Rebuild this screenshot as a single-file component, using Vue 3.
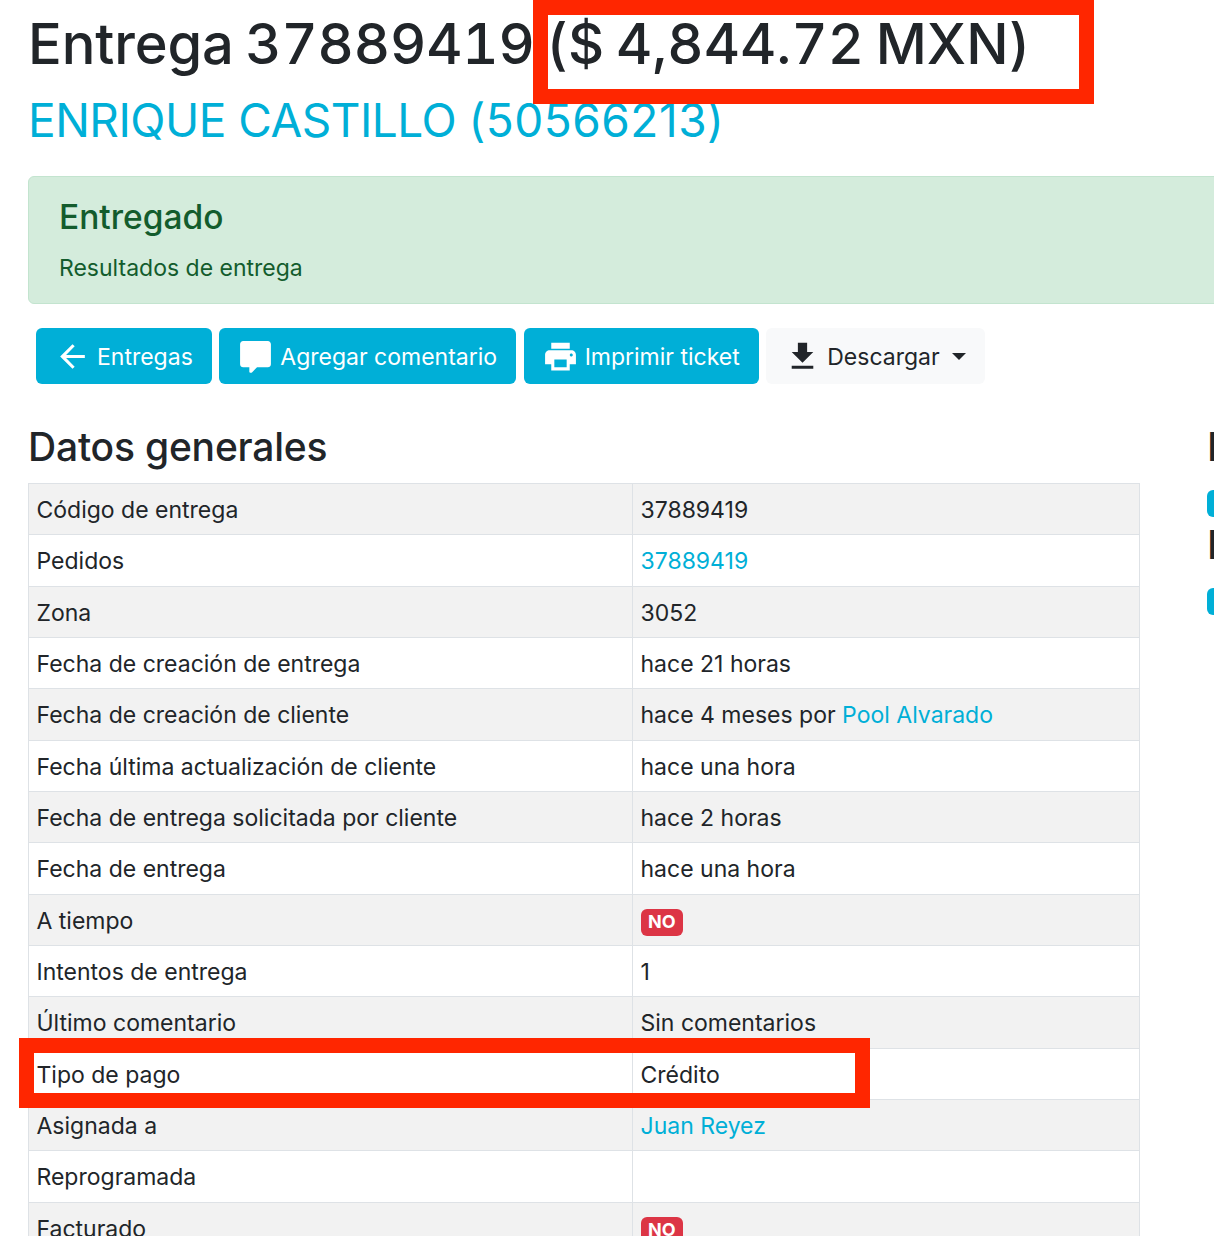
<script setup>
const rows = [
  { label: 'Código de entrega', value: '37889419' },
  { label: 'Pedidos', link: '37889419' },
  { label: 'Zona', value: '3052' },
  { label: 'Fecha de creación de entrega', value: 'hace 21 horas' },
  { label: 'Fecha de creación de cliente', value: 'hace 4 meses por ', link: 'Pool Alvarado' },
  { label: 'Fecha última actualización de cliente', value: 'hace una hora' },
  { label: 'Fecha de entrega solicitada por cliente', value: 'hace 2 horas' },
  { label: 'Fecha de entrega', value: 'hace una hora' },
  { label: 'A tiempo', badge: 'NO' },
  { label: 'Intentos de entrega', value: '1' },
  { label: 'Último comentario', value: 'Sin comentarios' },
  { label: 'Tipo de pago', value: 'Crédito' },
  { label: 'Asignada a', link: 'Juan Reyez' },
  { label: 'Reprogramada', value: '' },
  { label: 'Facturado', badge: 'NO' }
]
</script>

<template>
  <div class="page">
    <div class="wrap">
      <h1 class="title">Entrega 37889419 <span class="total">($ 4,844.72 MXN)</span></h1>
      <h2 class="client"><a>ENRIQUE CASTILLO <span class="client-code">(50566213)</span></a></h2>

      <div class="alert">
        <h4>Entregado</h4>
        <p>Resultados de entrega</p>
      </div>

      <div class="actions">
        <button class="btn info" type="button">
          <svg class="icon" viewBox="0 0 24 24"><path d="M20 11H7.83l5.59-5.59L12 4l-8 8 8 8 1.41-1.41L7.83 13H20v-2z"/></svg>
          Entregas
        </button>
        <button class="btn info" type="button">
          <svg class="icon" viewBox="0 0 24 24"><path d="M4 2h16c1.1 0 2 .9 2 2v13c0 1.1-.9 2-2 2h-7l-3.3 3.3c-.4.4-1.7.3-1.7-.3v-3H4c-1.1 0-2-.9-2-2V4c0-1.1.9-2 2-2z"/></svg>
          Agregar comentario
        </button>
        <button class="btn info" type="button">
          <svg class="icon" viewBox="0 0 24 24"><path d="M19 8H5c-1.66 0-3 1.34-3 3v6h4v4h12v-4h4v-6c0-1.66-1.34-3-3-3zm-3 11H8v-5h8v5zm3-7c-.55 0-1-.45-1-1s.45-1 1-1 1 .45 1 1-.45 1-1 1zm-1-9H6v4h12V3z"/></svg>
          Imprimir ticket
        </button>
        <button class="btn light" type="button">
          <svg class="icon" viewBox="0 0 24 24"><path d="M19 9h-4V3H9v6H5l7 7 7-7zM5 18v2h14v-2H5z"/></svg>
          Descargar
          <span class="caret"></span>
        </button>
      </div>

      <div class="columns">
        <section class="left">
          <h3 class="section-title">Datos generales</h3>
          <table class="data">
            <tbody>
              <tr v-for="row in rows" :key="row.label">
                <td class="c1">{{ row.label }}</td>
                <td>
                  {{ row.value }}<a v-if="row.link">{{ row.link }}</a>
                  <span v-if="row.badge" class="badge">{{ row.badge }}</span>
                </td>
              </tr>
            </tbody>
          </table>
        </section>
        <section class="right">
          <h3 class="section-title">Productos</h3>
          <div class="mini-btn"></div>
          <h3 class="section-title second">Pagos</h3>
          <div class="mini-btn"></div>
        </section>
      </div>
    </div>

    <div class="mark mark-total"></div>
    <div class="mark mark-pago"></div>
  </div>
</template>

<style>
html, body {
  margin: 0;
  overflow: hidden;
  background: #fff;
}
</style>

<style scoped>
.page {
  position: relative;
  width: 1214px;
  height: 1236px;
  overflow: hidden;
  font-family: Inter, "Liberation Sans", sans-serif;
  color: #212529;
  background: #fff;
}

.wrap {
  width: 1700px;
  padding: 9px 0 0 28px;
}

.title {
  margin: 0;
  font-size: 56px;
  line-height: 70px;
  font-weight: 500;
  white-space: nowrap;
  word-spacing: -3.5px;
  letter-spacing: -0.1px;
  font-variant-numeric: tabular-nums;
}

.total {
  letter-spacing: 0.05px;
}

.client {
  margin: 12px 0 0;
  font-size: 46px;
  line-height: 58px;
  font-weight: 400;
  white-space: nowrap;
  letter-spacing: -0.5px;
}

.client-code {
  letter-spacing: 0.5px;
}

a {
  color: #00afd7;
}

.alert {
  box-sizing: border-box;
  height: 128px;
  margin-top: 27px;
  padding: 19px 30px;
  background: #d4ecdc;
  border: 1px solid #c3e4cf;
  border-radius: 6px;
  color: #135c2d;
}

.alert h4 {
  margin: 0;
  font-size: 33.5px;
  line-height: 42px;
  font-weight: 550;
}

.alert p {
  margin: 15px 0 0;
  font-size: 23px;
  line-height: 30px;
}

.actions {
  display: flex;
  gap: 7.5px;
  margin: 24px 0 0 8px;
}

.btn {
  display: flex;
  align-items: center;
  gap: 6px;
  height: 56px;
  padding: 1px 19px 0 18px;
  border: 0;
  border-radius: 6px;
  font-family: inherit;
  font-size: 23px;
}

.btn.info {
  background: #00afd7;
  color: #fff;
}

.btn.light {
  background: #f8f9fa;
  color: #212529;
}

.icon {
  width: 37px;
  height: 37px;
  fill: currentColor;
}

.caret {
  width: 0;
  height: 0;
  margin-left: 6px;
  border-top: 7px solid #212529;
  border-left: 7px solid transparent;
  border-right: 7px solid transparent;
}

.columns {
  display: flex;
  gap: 67px;
  margin-top: 38px;
}

.left {
  width: 1112px;
}

.section-title {
  margin: 0;
  font-size: 39px;
  line-height: 50px;
  font-weight: 550;
  white-space: nowrap;
  letter-spacing: -0.2px;
}

.data {
  width: 100%;
  margin-top: 11px;
  border-collapse: collapse;
  table-layout: fixed;
  font-size: 23px;
}

.data tr {
  height: 51.33px;
}

.data tr:nth-child(odd) {
  background: #f2f2f2;
}

.data td {
  padding: 2px 8px 0 7.5px;
  border: 1px solid #dee2e6;
  white-space: nowrap;
}

.data .c1 {
  width: 587.5px;
}

.badge {
  display: inline-block;
  padding: 4.5px 7.5px;
  border-radius: 6px;
  background: #dc3545;
  color: #fff;
  font-size: 18px;
  line-height: 18px;
  font-weight: 700;
}

.mini-btn {
  width: 120px;
  height: 27px;
  margin-top: 18px;
  border-radius: 6px;
  background: #00afd7;
}

.second {
  margin-top: 3px;
}

.mark {
  position: absolute;
  box-sizing: border-box;
  border: 15px solid #ff2600;
}

.mark-total {
  left: 533px;
  top: 0;
  width: 561px;
  height: 104px;
}

.mark-pago {
  left: 19px;
  top: 1038px;
  width: 851px;
  height: 70px;
}
</style>
